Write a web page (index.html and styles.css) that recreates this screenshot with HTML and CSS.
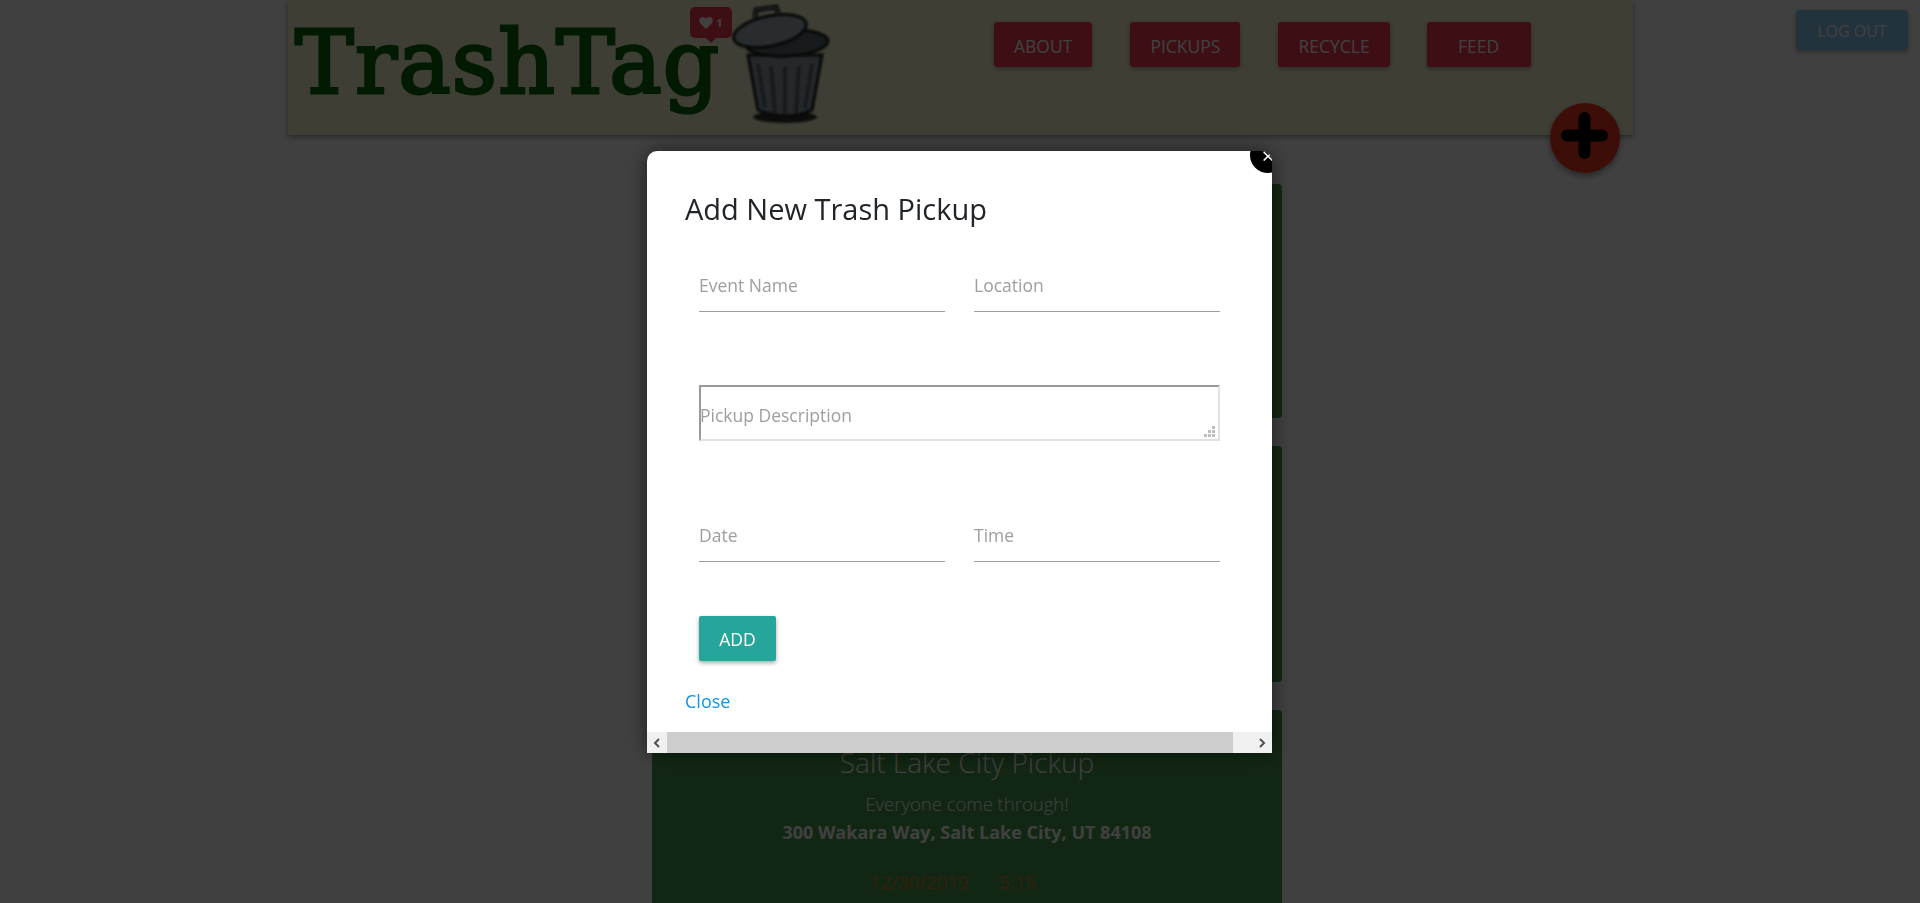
FILE: index.html
```html
<!DOCTYPE html>
<html lang="en">
<head>
  <meta charset="UTF-8">
  <meta name="viewport" content="width=device-width, initial-scale=1.0">
  <title>TrashTag</title>
  <link rel="stylesheet" href="styles.css">
</head>
<body>
  <button class="logout">LOG OUT</button>

  <header class="header">
    <div class="logo">
      <span class="logo-text">TrashTag</span>
      <div class="logo-badge">
        <svg class="logo-heart" viewBox="0 0 14 12" width="14" height="12">
          <path d="M7 12 L1 6 C-1 3 1 0 3.700 0 C5.200 0 6.400 1 7 2 C7.600 1 8.800 0 10.300 0 C13 0 15 3 13 6 Z"/>
        </svg>
        <span>1</span>
      </div>
      <svg class="logo-can" viewBox="725 0 110 125">
        <ellipse cx="785" cy="117" rx="32" ry="6" fill="#333"/>
        <path d="M748 55 L822 55 L812 110 Q785 122 758 110 Z" fill="#8f9fa8" stroke="#222" stroke-width="3"/>
        <path d="M758 64 L765 108 M771 66 L775 113 M785 67 L785 115 M799 66 L796 113 M812 64 L805 108" stroke="#56646c" stroke-width="3.500" fill="none"/>
        <ellipse cx="787" cy="43" rx="41" ry="13" fill="#5d6a70" stroke="#222" stroke-width="3" transform="rotate(-3 787 43)"/>
        <ellipse cx="770" cy="31" rx="37" ry="15" fill="#9fb0b8" stroke="#222" stroke-width="3" transform="rotate(-12 770 31)"/>
        <path d="M755 18 L756 10 L776 7 L779 15" fill="none" stroke="#222" stroke-width="5"/>
        <path d="M755 18 L756 10 L776 7 L779 15" fill="none" stroke="#8f9fa8" stroke-width="1.500"/>
      </svg>
    </div>
    <nav class="nav">
      <button class="nav-btn">About</button>
      <button class="nav-btn">Pickups</button>
      <button class="nav-btn">Recycle</button>
      <button class="nav-btn nav-btn-feed">Feed</button>
    </nav>
    <button class="fab">
      <svg viewBox="0 0 70 70" width="70" height="70">
        <path d="M34.500 15 V50 M17 32.500 H52" stroke="#000" stroke-width="12" stroke-linecap="round"/>
      </svg>
    </button>
  </header>

  <main class="pickups">
    <section class="card card-first"></section>
    <section class="card card-second"></section>
    <section class="card card-last">
      <h3 class="card-title">Salt Lake City Pickup</h3>
      <p class="card-desc">Everyone come through!</p>
      <p class="card-address">300 Wakara Way, Salt Lake City, UT 84108</p>
      <div class="card-when">
        <span>12/30/2019</span>
        <span>5:15</span>
      </div>
    </section>
  </main>

  <div class="overlay">
    <div class="modal">
      <button class="modal-x">×</button>
      <div class="modal-body">
        <h2 class="modal-title">Add New Trash Pickup</h2>
        <form class="form">
          <div class="form-row">
            <input class="field" type="text" placeholder="Event Name">
            <input class="field" type="text" placeholder="Location">
          </div>
          <div class="area-wrap">
            <textarea class="area" placeholder="Pickup Description"></textarea>
            <svg class="grip" viewBox="0 0 11 11" width="11" height="11">
              <rect x="8" y="0" width="3" height="3"/>
              <rect x="4" y="4" width="3" height="3"/>
              <rect x="8" y="4" width="3" height="3"/>
              <rect x="0" y="8" width="3" height="3"/>
              <rect x="4" y="8" width="3" height="3"/>
              <rect x="8" y="8" width="3" height="3"/>
            </svg>
          </div>
          <div class="form-row">
            <input class="field" type="text" placeholder="Date">
            <input class="field" type="text" placeholder="Time">
          </div>
          <button class="add-btn" type="button">ADD</button>
        </form>
        <a class="close-link" href="#">Close</a>
      </div>
      <div class="scrollbar">
        <div class="scroll-arrow">
          <svg viewBox="0 0 10 10" width="10" height="10"><path d="M7 1 L3 5 L7 9" fill="none" stroke="#505050" stroke-width="2"/></svg>
        </div>
        <div class="scroll-thumb"></div>
        <div class="scroll-arrow scroll-arrow-right">
          <svg viewBox="0 0 10 10" width="10" height="10"><path d="M3 1 L7 5 L3 9" fill="none" stroke="#505050" stroke-width="2"/></svg>
        </div>
      </div>
    </div>
  </div>
</body>
</html>
```

FILE: styles.css
```css
* {
  margin: 0;
  padding: 0;
  box-sizing: border-box;
}
html, body {
  height: 903px;
  overflow: hidden;
}
body {
  font-family: "Open Sans", "Noto Sans", sans-serif;
  background: #fff;
  color: #fff;
  position: relative;
}
button {
  font-family: inherit;
  border: none;
  cursor: pointer;
}

/* top bar */
.header {
  width: 1345px;
  height: 135px;
  margin-left: 288px;
  background: #f7f7d1;
  box-shadow: 0 2px 5px rgba(0, 0, 0, 0.4);
  display: flex;
  position: relative;
}
.logo {
  width: 547px;
  height: 135px;
  flex-shrink: 0;
  position: relative;
  padding: 41px 0 0 7px;
}
.logo-text {
  display: block;
  font-family: "DejaVu Serif", serif;
  font-size: 88px;
  letter-spacing: 1.200px;
  line-height: 44px;
  color: #0b660b;
  -webkit-text-stroke: 3px #0b660b;
  filter: blur(0.4px);
}
.logo-badge {
  position: absolute;
  left: 402px;
  top: 7px;
  width: 42px;
  height: 31px;
  border-radius: 5px;
  background: #f23e52;
  font-size: 11px;
  font-weight: 700;
  display: flex;
  align-items: center;
  justify-content: center;
  gap: 3px;
}
.logo-badge::after {
  content: "";
  position: absolute;
  left: 15px;
  top: 30px;
  border: 6px solid transparent;
  border-top-color: #f23e52;
  border-bottom: none;
}
.logo-heart {
  fill: #fff;
}
.logo-can {
  position: absolute;
  left: 437px;
  top: 0;
  width: 110px;
  height: 125px;
  filter: blur(0.8px);
}
.nav {
  display: flex;
  gap: 38px;
  margin: 22px 0 0 159px;
  align-items: flex-start;
}
.nav-btn {
  height: 45px;
  padding: 2px 20px 0;
  background: #f23e52;
  color: #fff;
  font-size: 17.500px;
  text-transform: uppercase;
  border-radius: 3px;
  box-shadow: 0 2px 5px rgba(0, 0, 0, 0.3);
}
.nav-btn-feed {
  width: 104px;
  margin-left: -1px;
}
.logout {
  position: absolute;
  top: 10px;
  left: 1796px;
  width: 112px;
  height: 40px;
  padding-top: 1px;
  background: #88c9f3;
  color: #fff;
  font-size: 16px;
  border-radius: 3px;
  box-shadow: 0 2px 5px rgba(0, 0, 0, 0.3);
}
.fab {
  position: absolute;
  top: 103px;
  right: 13px;
  width: 70px;
  height: 70px;
  border-radius: 50%;
  background: #f23a1f;
  box-shadow: 0 3px 6px rgba(0, 0, 0, 0.4);
  z-index: 2;
}
.fab svg {
  display: block;
}

/* pickups list */
.pickups {
  width: 630px;
  margin: 49px 0 0 652px;
  display: flex;
  flex-direction: column;
  gap: 28px;
}
.card {
  background: #499a4d;
  border-radius: 4px;
  padding-top: 33px;
  text-align: center;
  flex-shrink: 0;
}
.card-first {
  height: 234px;
}
.card-second {
  height: 236px;
}
.card-last {
  height: 193px;
  border-radius: 4px 4px 0 0;
}
.card-title {
  font-size: 28px;
  font-weight: 300;
  line-height: 38px;
}
.card-desc {
  font-size: 18.500px;
  line-height: 24px;
  margin-top: 11px;
  font-weight: 300;
}
.card-address {
  font-size: 18px;
  line-height: 24px;
  margin-top: 4px;
  font-weight: 700;
}
.card-when {
  display: flex;
  justify-content: center;
  gap: 31px;
  margin-top: 26px;
  padding-right: 28px;
  font-size: 18.500px;
  line-height: 24px;
  color: #d07a30;
}

/* modal */
.overlay {
  position: fixed;
  top: 0;
  left: 0;
  right: 0;
  bottom: 0;
  background: rgba(0, 0, 0, 0.75);
  display: flex;
  justify-content: center;
  padding: 151px 1px 0 0;
  z-index: 5;
}
.modal {
  width: 625px;
  height: 602px;
  background: #fff;
  color: #212529;
  border-radius: 10px 10px 0 0;
  box-shadow: 0 0 20px rgba(0, 0, 0, 0.55);
  display: flex;
  flex-direction: column;
  overflow: hidden;
  position: relative;
}
.modal-x {
  position: absolute;
  top: -14px;
  right: -14px;
  width: 36px;
  height: 36px;
  border-radius: 50%;
  background: #000;
  color: #fff;
  font-size: 22px;
  line-height: 36px;
}
.modal-body {
  flex: 1;
  padding: 39px 37px 0 38px;
}
.modal-title {
  font-size: 29px;
  font-weight: 400;
  line-height: 38px;
}
.form {
  margin: 39px 15px 0 14px;
}
.form-row {
  display: grid;
  grid-template-columns: 246px 246px;
  gap: 29px;
}
.field {
  height: 45px;
  padding-bottom: 8px;
  border: none;
  border-bottom: 1px solid #9e9e9e;
  outline: none;
  font-family: inherit;
  font-size: 17.500px;
}
.field::placeholder,
.area::placeholder {
  color: #9e9e9e;
  opacity: 1;
}
.area-wrap {
  position: relative;
  height: 56px;
  margin: 73px 0 76px;
}
.area {
  display: block;
  width: 100%;
  height: 56px;
  padding: 16px 0 0;
  border: 2px solid #e2e2e2;
  border-top-color: #9a9a9a;
  border-left-color: #9a9a9a;
  outline: none;
  resize: none;
  font-family: inherit;
  font-size: 17.500px;
  line-height: 24px;
  text-indent: -1px;
}
.grip {
  position: absolute;
  right: 5px;
  bottom: 4px;
  fill: #bdbdbd;
}
.add-btn {
  display: block;
  width: 77px;
  height: 45px;
  margin-top: 54px;
  padding-top: 1px;
  background: #26a69a;
  color: #fff;
  font-size: 17.500px;
  border-radius: 2px;
  box-shadow: 0 2px 4px rgba(0, 0, 0, 0.35);
}
.close-link {
  display: block;
  margin-top: 28px;
  font-size: 18px;
  line-height: 24px;
  color: #0b96e6;
  text-decoration: none;
}
.scrollbar {
  height: 21px;
  display: flex;
  background: #f0f0f0;
  flex-shrink: 0;
}
.scroll-arrow {
  width: 20px;
  display: flex;
  align-items: center;
  justify-content: center;
}
.scroll-arrow-right {
  width: 39px;
  justify-content: flex-end;
  padding-right: 5px;
}
.scroll-thumb {
  flex: 1;
  background: #cdcdcd;
}
```
